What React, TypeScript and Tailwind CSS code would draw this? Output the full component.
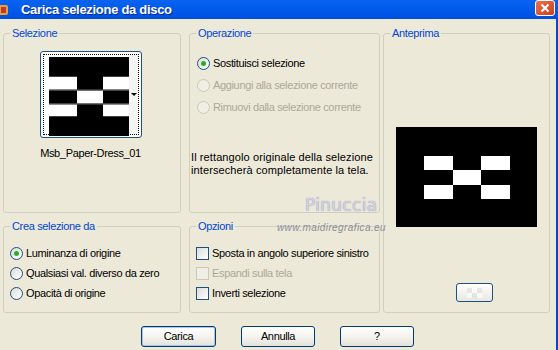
import React from "react";

function Radio({ checked, disabled, label, h }: { checked?: boolean; disabled?: boolean; label: string; h: string }) {
  return (
    <div className={`flex items-center ${h}`}>
      <span
        className={`w-[13px] h-[13px] rounded-full border flex items-center justify-center shrink-0 ${
          disabled ? "border-[#CAC8BB] bg-[#F1EFE5]" : "border-[#1C5180] bg-gradient-to-br from-[#DCDCD7] to-white"
        }`}
      >
        {checked && <span className="w-[5px] h-[5px] rounded-full bg-[#2AAE2A]" />}
      </span>
      <span className={`ml-[3px] ${disabled ? "text-[#ACA899]" : "text-black"}`}>{label}</span>
    </div>
  );
}

function Check({ disabled, label }: { disabled?: boolean; label: string }) {
  return (
    <div className="flex items-center h-[20px]">
      <span
        className={`w-[13px] h-[13px] border shrink-0 ${
          disabled ? "border-[#CAC8BB] bg-[#F1EFE5]" : "border-[#1C5180] bg-gradient-to-br from-[#DCDCD7] to-white"
        }`}
      />
      <span className={`ml-[3px] ${disabled ? "text-[#ACA899]" : "text-black"}`}>{label}</span>
    </div>
  );
}

function Group({ title, className, children }: { title: string; className: string; children?: React.ReactNode }) {
  return (
    <fieldset className={`border border-[#D0D0BF] rounded-[3px] px-[6px] ${className}`}>
      <legend className="px-[2px] text-[#0046D5] leading-[12px]">{title}</legend>
      {children}
    </fieldset>
  );
}

function XpButton({ label, def, className }: { label: string; def?: boolean; className: string }) {
  return (
    <button
      className={`h-[21px] rounded-[3px] border border-[#003C74] bg-gradient-to-b from-white via-[#F4F3EE] to-[#E3E2DA] text-black ${
        def ? "shadow-[inset_0_0_0_1px_#A9C4EF]" : ""
      } ${className}`}
    >
      {label}
    </button>
  );
}

function Pattern({ w, h }: { w: number; h: number }) {
  return (
    <svg width={w} height={h} viewBox="0 0 80 80" preserveAspectRatio="none">
      <rect width="80" height="80" fill="#000" />
      <rect x="0" y="20" width="28" height="13" fill="#fff" />
      <rect x="54" y="20" width="26" height="13" fill="#fff" />
      <rect x="28" y="34" width="26" height="13" fill="#fff" />
      <rect x="0" y="48" width="28" height="12" fill="#fff" />
      <rect x="54" y="48" width="26" height="12" fill="#fff" />
      <line x1="0" y1="33.5" x2="80" y2="33.5" stroke="#777" strokeWidth="1" />
      <line x1="0" y1="47.5" x2="80" y2="47.5" stroke="#777" strokeWidth="1" />
    </svg>
  );
}

export default function App() {
  return (
    <div className="w-[558px] h-[350px] overflow-hidden flex flex-col bg-[#0054E3] font-['Liberation_Sans',Arial,sans-serif] text-[11px] tracking-[-0.35px]">
      {/* title bar */}
      <div className="h-[19px] shrink-0 flex items-center bg-gradient-to-b from-[#0A62F0] via-[#005BEB] to-[#004FDF] pl-[4px] pr-[3px]">
        <svg width="14" height="14" viewBox="0 0 14 14" className="-ml-[8px]">
          <rect x="2" y="2" width="10" height="10" rx="2" fill="#E9A23B" />
          <rect x="5" y="4" width="5" height="6" fill="#C0392B" />
        </svg>
        <span className="ml-[11px] text-white font-bold text-[13px] tracking-[-0.3px] [text-shadow:1px_1px_0_#0A2A8A]">
          Carica selezione da disco
        </span>
        <div className="ml-auto w-[20px] h-[16px] -mt-[3px] rounded-[3px] border border-white bg-gradient-to-br from-[#E9714D] to-[#C8401E] flex items-center justify-center">
          <svg width="10" height="10" viewBox="0 0 10 10">
            <path d="M1.5 1.5 L8.5 8.5 M8.5 1.5 L1.5 8.5" stroke="#fff" strokeWidth="2" />
          </svg>
        </div>
      </div>

      {/* body */}
      <div className="relative flex-1 bg-[#ECE9D8] mr-[2px] pl-[3px] pt-[8px]">
        <div className="flex">
          <div className="grid grid-cols-[178px_191px] grid-rows-[186px_93px] gap-x-[8px] gap-y-[7px]">
            <Group title="Selezione" className="">
              <div className="flex flex-col items-center mr-[3px]">
                <div className="mt-[12px] w-[102px] h-[87px] rounded-[3px] border border-[#1C5180] bg-white p-[2px]">
                  <div className="relative w-full h-full border border-dotted border-black flex">
                    <div className="ml-[5px] mt-[2px]">
                      <Pattern w={80} h={79} />
                    </div>
                    <div className="flex-1 bg-[#F4F4F4] flex items-center justify-center">
                      <span className="w-0 h-0 border-l-[3px] border-r-[3px] border-t-[3px] border-l-transparent border-r-transparent border-t-black ml-[2px]" />
                    </div>
                  </div>
                </div>
                <div className="mt-[7px] text-black">Msb_Paper-Dress_01</div>
              </div>
            </Group>

            <Group title="Operazione" className="">
              <div className="mt-[13px] ml-[1px]">
                <Radio checked label="Sostituisci selezione" h="h-[22px]" />
                <Radio disabled label="Aggiungi alla selezione corrente" h="h-[22px]" />
                <Radio disabled label="Rimuovi dalla selezione corrente" h="h-[22px]" />
              </div>
              <div className="mt-[33px] -ml-[5px] -mr-[6px] whitespace-nowrap leading-[13px] tracking-[0.1px] text-black">
                Il rettangolo originale della selezione
                <br />
                intersecherà completamente la tela.
              </div>
            </Group>

            <Group title="Crea selezione da" className="">
              <div className="mt-[11px]">
                <Radio checked label="Luminanza di origine" h="h-[20px]" />
                <Radio label="Qualsiasi val. diverso da zero" h="h-[20px]" />
                <Radio label="Opacità di origine" h="h-[20px]" />
              </div>
            </Group>

            <Group title="Opzioni" className="">
              <div className="mt-[11px]">
                <Check label="Sposta in angolo superiore sinistro" />
                <Check disabled label="Espandi sulla tela" />
                <Check label="Inverti selezione" />
              </div>
            </Group>
          </div>

          <Group title="Anteprima" className="ml-[3px] w-[167px] h-[286px]">
            <div className="flex flex-col items-center">
              <div className="mt-[88px] w-[141px] h-[100px] bg-black flex flex-col items-center justify-center">
                <div className="flex">
                  <div className="w-[29px] h-[14px] bg-white" />
                  <div className="w-[28px] h-[14px]" />
                  <div className="w-[29px] h-[14px] bg-white" />
                </div>
                <div className="flex">
                  <div className="w-[29px] h-[15px]" />
                  <div className="w-[28px] h-[15px] bg-white" />
                  <div className="w-[29px] h-[15px]" />
                </div>
                <div className="flex">
                  <div className="w-[29px] h-[14px] bg-white" />
                  <div className="w-[28px] h-[14px]" />
                  <div className="w-[29px] h-[14px] bg-white" />
                </div>
              </div>
              <div className="mt-[56px] ml-[16px] w-[37px] h-[19px] rounded-[3px] border border-[#1C5180] bg-gradient-to-b from-white to-[#E8E7E0] flex items-center justify-center">
                <div className="grid grid-cols-3 opacity-60">
                  <div className="w-[5px] h-[5px] bg-[#DDD]" />
                  <div className="w-[5px] h-[5px] bg-white" />
                  <div className="w-[5px] h-[5px] bg-[#DDD]" />
                  <div className="w-[5px] h-[5px] bg-white" />
                  <div className="w-[5px] h-[5px] bg-[#DDD]" />
                  <div className="w-[5px] h-[5px] bg-white" />
                </div>
              </div>
            </div>
          </Group>
        </div>

        {/* buttons */}
        <div className="flex mt-[13px] ml-[138px] gap-[25px]">
          <XpButton def label="Carica" className="w-[75px]" />
          <XpButton label="Annulla" className="w-[74px]" />
          <XpButton label="?" className="w-[74px]" />
        </div>

        {/* watermark */}
        <div className="absolute left-[305px] top-[174px] text-[17px] tracking-[0.3px] text-[#D4D4E8] [text-shadow:0_0_1px_#7A7A96] font-['DejaVu_Sans',sans-serif]">
          Pinuccia
        </div>
        <div className="absolute left-[277px] top-[201px] text-[10px] tracking-[0.4px] text-[#8C8C9C] font-['Liberation_Sans',sans-serif] italic">
          www.maidiregrafica.eu
        </div>
      </div>
      <div className="absolute top-[19px] left-[556px] w-[2px] h-[331px] bg-[#0048D8]" />
    </div>
  );
}
